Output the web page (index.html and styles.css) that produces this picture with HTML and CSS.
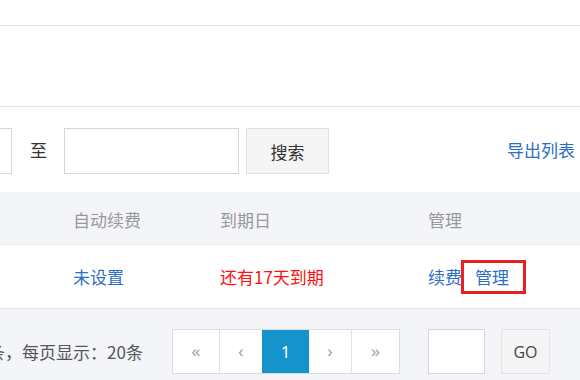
FILE: index.html
```html
<!DOCTYPE html>
<html lang="zh-CN">
<head>
<meta charset="utf-8">
<title>列表</title>
<link rel="stylesheet" href="styles.css">
</head>
<body>
<div class="page">
  <div class="top-bar"></div>
  <div class="blank-panel"></div>
  <div class="filter">
    <input class="date-input date-start" type="text">
    <span class="to">至</span>
    <input class="date-input date-end" type="text">
    <button class="search-btn" type="button">搜索</button>
    <a class="export" href="#">导出列表</a>
  </div>
  <div class="table-head">
    <span class="col col-renew">自动续费</span>
    <span class="col col-date">到期日</span>
    <span class="col col-manage">管理</span>
  </div>
  <div class="table-row">
    <span class="col col-renew"><a class="link" href="#">未设置</a></span>
    <span class="col col-date expire">还有17天到期</span>
    <span class="col col-manage"><a class="link" href="#">续费</a><a class="link marked" href="#">管理</a></span>
  </div>
  <div class="pager">
    <div class="summary"><span>共1条，每页显示：20条</span></div>
    <div class="pages">
      <span class="pg pg-first">&laquo;</span>
      <span class="pg pg-prev">&lsaquo;</span>
      <span class="pg pg-cur">1</span>
      <span class="pg pg-next">&rsaquo;</span>
      <span class="pg pg-last">&raquo;</span>
    </div>
    <input class="jump-input" type="text">
    <button class="go-btn" type="button">GO</button>
  </div>
</div>
</body>
</html>
```

FILE: styles.css
```css
html, body {
  margin: 0;
  padding: 0;
  background: #ffffff;
}
body {
  font-family: "Noto Sans CJK SC", "Noto Sans", sans-serif;
  font-size: 17px;
  color: #333;
}
.page {
  width: 580px;
  height: 380px;
  overflow: hidden;
  display: flex;
  flex-direction: column;
}
.top-bar {
  height: 25px;
  flex: none;
  border-bottom: 1px solid #e3e3e3;
}
.blank-panel {
  height: 80px;
  flex: none;
  border-bottom: 1px solid #e3e3e3;
}
.filter {
  flex: none;
  height: 85px;
  box-sizing: border-box;
  padding-top: 21px;
  display: flex;
  align-items: flex-start;
}
.date-input {
  box-sizing: border-box;
  height: 46px;
  border: 1px solid #d6d6d6;
  background: #fff;
  margin: 0;
  padding: 0;
  outline: none;
}
.date-start {
  width: 100px;
  margin-left: -88px;
}
.to {
  line-height: 44px;
  margin: 0 18px;
  width: 16px;
  color: #333;
}
.date-end {
  width: 175px;
}
.search-btn {
  box-sizing: border-box;
  margin: 0 0 0 7px;
  width: 83px;
  height: 46px;
  border: 1px solid #e0e0e0;
  background: #f5f5f5;
  font-family: inherit;
  font-size: 17px;
  color: #333;
  padding: 0;
}
.export {
  margin-left: auto;
  margin-right: 5px;
  line-height: 44px;
  color: #2b6fc6;
  text-decoration: none;
}
.table-head {
  flex: none;
  height: 53px;
  box-sizing: border-box;
  background: #f3f5f8;
  border-bottom: 1px solid #e6e8ec;
  display: grid;
  grid-template-columns: 147px 208px 1fr;
  align-items: center;
  padding-left: 73px;
  padding-top: 3px;
  color: #999;
}
.table-row {
  flex: none;
  height: 64px;
  box-sizing: border-box;
  border-bottom: 1px solid #e3e5e9;
  display: grid;
  grid-template-columns: 147px 208px 1fr;
  align-items: center;
  padding-left: 73px;
}
.link {
  color: #2b6fc6;
  text-decoration: none;
}
.expire {
  color: #ff1010;
}
.col-manage {
  display: flex;
  align-items: center;
}
.marked {
  display: inline-block;
  border: 3px solid #e8201f;
  padding: 0 14px 0 11px;
  line-height: 28px;
  margin-left: -1px;
}
.pager {
  flex: 1;
  background: #f3f5f8;
  display: flex;
  align-items: flex-start;
  padding-top: 20px;
  box-sizing: border-box;
}
.summary {
  width: 143px;
  display: flex;
  justify-content: flex-end;
  white-space: nowrap;
  line-height: 45px;
  color: #555;
  flex: none;
}
.pages {
  display: flex;
  margin-left: 29px;
  border: 1px solid #dcdcdc;
  background: #fff;
  height: 45px;
  box-sizing: border-box;
}
.pg {
  display: flex;
  align-items: center;
  justify-content: center;
  color: #9a9a9a;
  font-family: "Liberation Sans", sans-serif;
  font-size: 16px;
  border-left: 1px solid #e2e2e2;
}
.pg-first { width: 46px; border-left: none; }
.pg-prev { width: 42px; }
.pg-cur {
  width: 47px;
  background: #1594cc;
  color: #fff;
  border-left: none;
  font-family: "Noto Sans", sans-serif;
  font-size: 17px;
}
.pg-next { width: 42px; border-left: none; }
.pg-last { width: 47px; }
.jump-input {
  box-sizing: border-box;
  margin: 0 0 0 28px;
  padding: 0;
  width: 57px;
  height: 45px;
  border: 1px solid #d6d6d6;
  background: #fff;
  outline: none;
}
.go-btn {
  box-sizing: border-box;
  margin: 0 0 0 16px;
  width: 49px;
  height: 45px;
  border: 1px solid #e3e3e3;
  background: #f5f5f5;
  font-family: "Open Sans", "Noto Sans", sans-serif;
  font-size: 16px;
  color: #444;
  padding: 0;
}
```
